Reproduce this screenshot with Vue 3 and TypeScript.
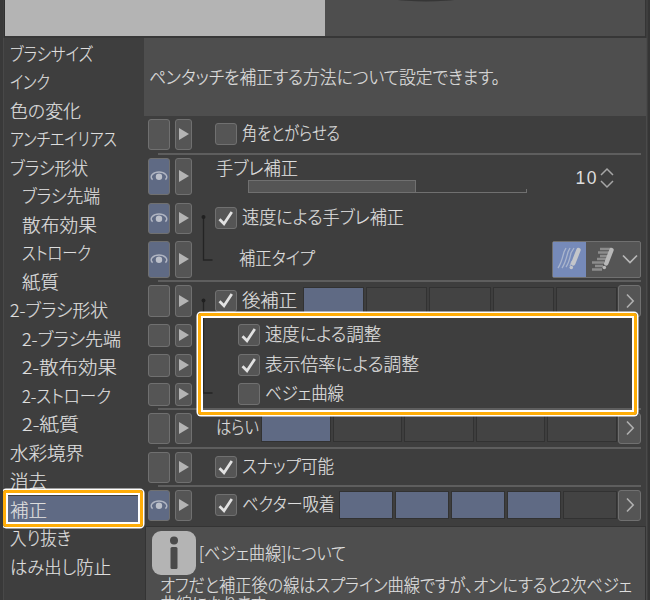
<script setup lang="ts">
import { h } from 'vue'

// One line of label text, set to a fixed measure
const Fit = (p: { t: string; w: number }) =>
  h('svg', { class: 'fit', width: p.w, height: 22 }, [
    h('text', { x: 0, y: 17, textLength: p.w, lengthAdjust: 'spacingAndGlyphs' }, p.t),
  ])
Fit.props = ['t', 'w']

interface Category { t: string; w: number; sub?: boolean; on?: boolean }
const categories: Category[] = [
  { t: 'ブラシサイズ', w: 83 },
  { t: 'インク', w: 40 },
  { t: '色の変化', w: 71 },
  { t: 'アンチエイリアス', w: 107 },
  { t: 'ブラシ形状', w: 78 },
  { t: 'ブラシ先端', w: 78, sub: true },
  { t: '散布効果', w: 75, sub: true },
  { t: 'ストローク', w: 69, sub: true },
  { t: '紙質', w: 37, sub: true },
  { t: '2-ブラシ形状', w: 98 },
  { t: '2-ブラシ先端', w: 99, sub: true },
  { t: '2-散布効果', w: 95, sub: true },
  { t: '2-ストローク', w: 89, sub: true },
  { t: '2-紙質', w: 57, sub: true },
  { t: '水彩境界', w: 74 },
  { t: '消去', w: 37 },
  { t: '補正', w: 37, on: true },
  { t: '入り抜き', w: 61 },
  { t: 'はみ出し防止', w: 101 },
]

interface Row {
  t: string; w: number; height: number; gap: number
  eye?: boolean; check?: boolean; indent?: 'child' | 'type'
  rule?: boolean; kind?: 'slider' | 'type'; filled?: number; segW?: number
}
const rows: Row[] = [
  { t: '角をとがらせる', w: 98, height: 31, gap: 3, check: false },
  { t: '手ブレ補正', w: 82, height: 37, gap: 3, rule: true, eye: true, kind: 'slider' },
  { t: '速度による手ブレ補正', w: 162, height: 31, gap: 8, eye: true, check: true },
  { t: '補正タイプ', w: 76, height: 37, gap: 7, eye: true, indent: 'type', kind: 'type' },
  { t: '後補正', w: 55, height: 32, gap: 2, rule: true, check: true, filled: 1, segW: 314 },
  { t: '速度による調整', w: 116, height: 23, gap: 7, check: true, indent: 'child' },
  { t: '表示倍率による調整', w: 154, height: 23, gap: 7, check: true, indent: 'child' },
  { t: 'ベジェ曲線', w: 79, height: 23, gap: 6, check: false, indent: 'child' },
  { t: 'はらい', w: 43, height: 31, gap: 2, rule: true, filled: 1, segW: 356 },
  { t: 'スナップ可能', w: 92, height: 31, gap: 3, rule: true, check: true },
  { t: 'ベクター吸着', w: 93, height: 31, gap: 2, rule: true, eye: true, check: true, filled: 4, segW: 278 },
]
</script>

<template>
  <div class="window">
    <div class="preview">
      <div class="stroke"></div>
      <div class="brush"><svg width="80" height="3"><ellipse cx="39" cy="-7" rx="50" ry="8.5" fill="#363636" /></svg></div>
    </div>
    <div class="body">
      <nav class="side">
        <div v-for="c in categories" :key="c.t" class="cat" :class="{ sub: c.sub, on: c.on }">
          <Fit :t="c.t" :w="c.w" />
        </div>
        <div class="mark mark-side"></div>
      </nav>
      <main class="main">
        <header class="desc"><Fit t="ペンタッチを補正する方法について設定できます。" :w="351" /></header>
        <section class="rows">
          <template v-for="r in rows" :key="r.t">
            <div v-if="r.rule" class="rule" :style="{ marginTop: r.gap + 'px' }"></div>
            <div class="row" :class="r.indent" :style="{ height: r.height + 'px', marginTop: (r.rule ? 3 : r.gap) + 'px' }">
              <span class="box eye" :class="{ lit: r.eye }">
                <svg v-if="r.eye" width="18" height="12" viewBox="0 0 18 12">
                  <path d="M2.600 9.600C-1.200 6.400 3.400 2 9 2s10.200 4.400 6.400 7.600" fill="none" stroke="#b0b5c2" stroke-width="1.5" />
                  <circle cx="9" cy="6.8" r="3.2" fill="#bcc0ca" />
                </svg>
              </span>
              <span class="box play"><svg width="12" height="14"><path d="M1 1l10 6-10 6z" fill="#b4b4b4" /></svg></span>
              <span class="content" :class="[r.kind, { checked: r.check !== undefined }]">
                <span v-if="r.check !== undefined" class="box check">
                  <svg v-if="r.check" width="16" height="17"><path d="M1.5 9.2l4.5 4.6L13.8 2" fill="none" stroke="#e2e2e2" stroke-width="2.7" /></svg>
                </span>
                <Fit :t="r.t" :w="r.w" />
                <template v-if="r.kind === 'slider'">
                  <span class="track"><i class="fill"></i><i class="rest"></i></span>
                </template>
              </span>
              <span v-if="r.kind === 'slider'" class="spin">
                <span class="num">10</span>
                <svg width="14" height="22"><path d="M1 8l6-6 6 6M1 14l6 6 6-6" fill="none" stroke="#a6a6a6" stroke-width="1.5" /></svg>
              </span>
              <span v-if="r.kind === 'type'" class="combo">
                <i class="opt sel"><svg width="28" height="28">
                  <g fill="none" stroke="#aab5cd" stroke-width="1.3"><path d="M2 23q3-4 6-16l2-4M6 23q3-4 6-16l2-4M10 22q3-4 5-14l3-5M14 21l2-5" /></g>
                  <path d="M22.5 5l-5.3 13.5" stroke="#c4c6ca" stroke-width="4.4" stroke-linecap="round" /><circle cx="15.3" cy="22.5" r="1.8" fill="#c4c6ca" />
                </svg></i>
                <i class="opt"><svg width="28" height="28">
                  <path d="M11 4h11M9 7.500h11M11 11h8M8 14h9M3 17.500h12M6 21h8M3 24.500h10" stroke="#8c8c8c" stroke-width="2.300" />
                  <path d="M22.5 5l-5.3 13.5" stroke="#b8b8b8" stroke-width="4.4" stroke-linecap="round" /><circle cx="15.3" cy="22.5" r="1.8" fill="#b8b8b8" />
                </svg></i>
                <i class="down"><svg width="16" height="10"><path d="M1 1.5l7 7 7-7" fill="none" stroke="#b8b8b8" stroke-width="1.7" /></svg></i>
              </span>
              <template v-if="r.filled">
                <span class="segs" :style="{ width: r.segW + 'px' }"><i v-for="n in 5" :key="n" :class="{ full: n <= r.filled }"></i></span>
                <span class="box more"><svg width="10" height="16"><path d="M2 1.5L8.2 8 2 14.5" fill="none" stroke="#b0b0b0" stroke-width="1.6" /></svg></span>
              </template>
            </div>
          </template>
        </section>
        <svg class="tree" width="14" height="186">
          <g fill="none" stroke="#242424" stroke-width="1.3"><path d="M4.5 3v43h9M4.500 86v93h9" /></g>
          <circle cx="4.500" cy="3" r="2" fill="#202020" /><circle cx="4.500" cy="86.500" r="2" fill="#202020" />
        </svg>
        <div class="mark mark-main"></div>
        <aside class="info">
          <div class="head">
            <svg width="44" height="44"><rect width="44" height="44" rx="9" fill="#b4b4b4" /><circle cx="22" cy="9.500" r="4" fill="#4a4a4a" /><rect x="18.500" y="16" width="7" height="22" rx="1.500" fill="#4a4a4a" /></svg>
            <Fit t="[ベジェ曲線]について" :w="147" />
          </div>
          <Fit t="オフだと補正後の線はスプライン曲線ですが、オンにすると2次ベジェ" :w="472" />
          <Fit t="曲線になります。" :w="112" />
        </aside>
      </main>
    </div>
  </div>
</template>

<style>
body { margin: 0; background: #3e3e3e; overflow: hidden; }
</style>

<style scoped>
.window { width: 650px; height: 600px; overflow: hidden; box-sizing: border-box; display: flex; flex-direction: column; background: #3e3e3e; border-right: 2px solid #353535; border-left: 3px solid #393939; font-family: "Noto Sans CJK JP", sans-serif; font-weight: 300; font-size: 18px; color: #dedede; }
.fit { display: block; flex: none; overflow: visible; fill: currentColor; stroke: currentColor; stroke-width: .2px; font-feature-settings: "palt"; }
.preview { flex: none; height: 36px; margin-left: 1px; margin-right: 2px; border-bottom: 2px solid #373737; border-left: 1px solid #303030; border-right: 1px solid #353535; display: flex; background: #4e4e4e; }
.stroke { width: 320px; background: #b4b4b4; }
.brush { flex: 1; padding-left: 62px; }
.brush svg { display: block; }
.body { flex: 1; min-height: 0; display: flex; border-left: 1px solid #484848; }
.side { position: relative; width: 140px; flex: none; padding-top: 1.500px; }
.cat { box-sizing: border-box; height: 28.500px; display: flex; align-items: center; padding-left: 6px; padding-top: 2px; }
.cat.sub { padding-left: 18px; }
.cat.on { background: #5f6a84; }
.mark { position: absolute; box-sizing: border-box; border: 3px solid #ffad08; border-radius: 3px; box-shadow: 0 0 0 1.500px #fff, inset 0 0 0 2px #fff; z-index: 2; }
.mark-side { left: -1px; top: 452px; width: 140px; height: 37px; }
.mark-main { left: 54px; top: 275px; width: 439px; height: 102px; }
.main { position: relative; width: 502px; flex: none; display: flex; flex-direction: column; border-right: 1px solid #4a4a4a; }
.desc { height: 77.500px; flex: none; box-sizing: border-box; background: #4e4e4e; display: flex; align-items: center; padding: 2px 0 0 5px; }
.rows { height: 410.500px; flex: none; padding-left: 4px; box-sizing: border-box; }
.rule { height: 2px; margin-left: 10px; width: 483px; background: #5e5e5e; }
.row { display: flex; align-items: center; width: 493px; }
.box { display: flex; align-items: center; justify-content: center; box-sizing: border-box; border: 1px solid #707070; border-radius: 3px; background: #555; flex: none; }
.eye { width: 22px; height: 100%; }
.eye.lit { background: #5f6a84; }
.play { width: 17px; height: 100%; margin-left: 5px; }
.content { display: flex; align-items: center; padding-left: 24px; }
.content.checked { gap: 5px; padding-left: 23px; }
.child .content.checked { padding-left: 46px; }
.type .content { padding-left: 47px; }
.check { width: 22px; height: 22px; }
.slider { width: 314px; flex-direction: column; align-items: flex-start; align-self: stretch; }
.track { display: flex; align-items: flex-end; margin-left: 32px; height: 13px; }
.fill { box-sizing: border-box; width: 168px; height: 13px; border: 1px solid #707070; background: #555; }
.rest { box-sizing: border-box; width: 111px; height: 4px; border-bottom: 1.500px solid #707070; border-right: 1px solid #707070; }
.spin { display: flex; align-items: center; gap: 2px; margin-left: auto; margin-right: 27px; padding-top: 4px; }
.num { font-family: "Liberation Sans", sans-serif; font-size: 17.500px; line-height: 22px; letter-spacing: 1.500px; }
.combo { display: flex; box-sizing: border-box; height: 100%; width: 89px; margin-left: auto; border: 1px solid #707070; border-radius: 2px; background: #555; }
.opt { width: 33px; display: flex; align-items: center; justify-content: center; }
.opt.sel { background: #768ab9; }
.down { flex: 1; display: flex; align-items: center; justify-content: center; }
.segs { display: flex; gap: 2px; height: 28px; margin-left: auto; }
.segs i { flex: 1; box-sizing: border-box; border: 1px solid #323232; background: #434343; }
.segs i.full { background: #5f6a84; }
.more { width: 23px; height: 100%; margin-left: 1px; }
.tree { position: absolute; left: 55px; top: 176px; }
.info { flex: 1; min-height: 0; margin-left: 1px; border: 1px solid #343434; border-bottom: 0; background: #4e4e4e; padding: 4px 0 0 14px; }
.head { display: flex; align-items: center; gap: 3px; margin-left: -8px; height: 44px; }
.head .fit { padding-top: 2px; }
.info > .fit { margin-bottom: -3px; }
</style>
